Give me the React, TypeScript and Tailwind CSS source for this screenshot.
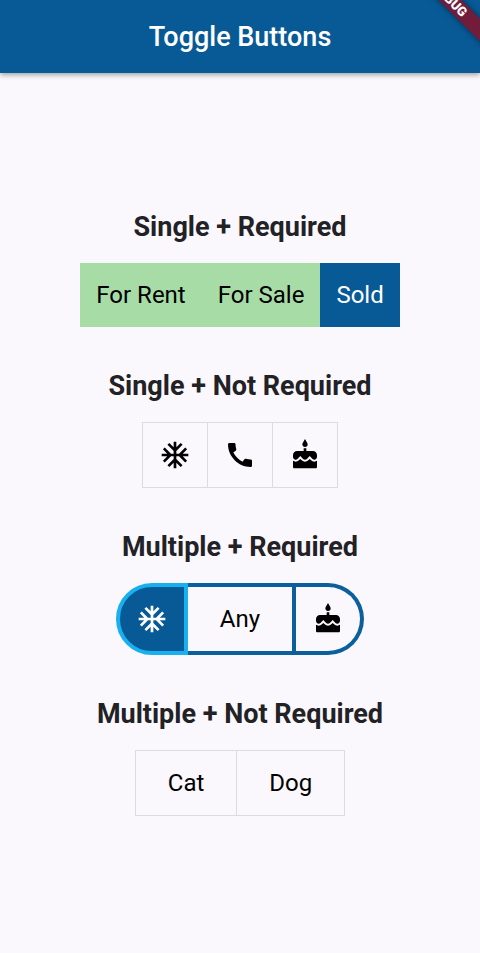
import { useState, type ReactNode } from "react";
import { MdAcUnit, MdCake, MdCall } from "react-icons/md";

type SectionProps = { title: string; children: ReactNode };

function Section({ title, children }: SectionProps) {
  return (
    <section className="flex flex-col items-center gap-5">
      <h2 className="text-[27px] leading-8 font-bold text-[#222126]">{title}</h2>
      <div role="group" aria-label={title} className="flex">
        {children}
      </div>
    </section>
  );
}

function useToggles(initial: boolean[], multiple: boolean, required: boolean) {
  const [on, setOn] = useState(initial);
  const toggle = (index: number) => {
    const next = on.map((value, i) => (i === index ? !value : multiple && value));
    if (required && !next.includes(true)) return;
    setOn(next);
  };
  return [on, toggle] as const;
}

const plainItem = "flex h-[66px] items-center border border-[#dcdbdf] not-first:border-l-0";

export default function App() {
  const [status, toggleStatus] = useToggles([false, false, true], false, true);
  const [single, toggleSingle] = useToggles([false, false, false], false, false);
  const [many, toggleMany] = useToggles([true, false, false], true, true);
  const [pets, togglePets] = useToggles([false, false], true, false);

  return (
    <div className="relative flex min-h-screen flex-col overflow-hidden bg-[#faf8fc] font-['Roboto',sans-serif] text-black">
      <header className="flex h-[73px] items-center justify-center bg-[#085a96] shadow-[0_2px_5px_rgba(0,0,0,0.35)]">
        <h1 className="text-[27px] leading-8 font-medium text-white">Toggle Buttons</h1>
      </header>
      <div className="absolute -top-2 -right-[50px] flex h-4 w-40 rotate-45 items-center justify-center bg-[#721c3b] text-[13px] leading-4 font-black text-white shadow-[0_0_6px_rgba(0,0,0,0.5)]">
        DEBUG
      </div>

      <main className="flex flex-1 flex-col items-center justify-center gap-[43px]">
        <Section title="Single + Required">
          {["For Rent", "For Sale", "Sold"].map((label, i) => (
            <button
              key={label}
              type="button"
              aria-pressed={status[i]}
              onClick={() => toggleStatus(i)}
              className={`h-16 px-4 text-2xl ${status[i] ? "bg-[#085a96] text-white" : "bg-[#a7dca7]"}`}
            >
              {label}
            </button>
          ))}
        </Section>

        <Section title="Single + Not Required">
          {[
            { name: "Cold", Icon: MdAcUnit },
            { name: "Call", Icon: MdCall },
            { name: "Cake", Icon: MdCake },
          ].map(({ name, Icon }, i) => (
            <button
              key={name}
              type="button"
              aria-label={name}
              aria-pressed={single[i]}
              onClick={() => toggleSingle(i)}
              className={`${plainItem} px-4 ${single[i] ? "bg-[#dbe7f1]" : ""}`}
            >
              <Icon className="size-8" />
            </button>
          ))}
        </Section>

        <Section title="Multiple + Required">
          {[
            { name: "Cold", content: <MdAcUnit className="size-8" />, padding: "px-4" },
            { name: "Any", content: "Any", padding: "px-8" },
            { name: "Cake", content: <MdCake className="size-8" />, padding: "px-4" },
          ].map(({ name, content, padding }, i) => (
            <button
              key={name}
              type="button"
              aria-label={name}
              aria-pressed={many[i]}
              onClick={() => toggleMany(i)}
              className={`flex h-[72px] items-center border-4 text-2xl not-first:border-l-0 first:rounded-l-full last:rounded-r-full ${padding} ${
                many[i] ? "border-[#18b0ee] bg-[#085a96] text-white" : "border-[#0b5f9c]"
              }`}
            >
              {content}
            </button>
          ))}
        </Section>

        <Section title="Multiple + Not Required">
          {["Cat", "Dog"].map((label, i) => (
            <button
              key={label}
              type="button"
              aria-pressed={pets[i]}
              onClick={() => togglePets(i)}
              className={`${plainItem} px-8 text-2xl ${pets[i] ? "bg-[#dbe7f1]" : ""}`}
            >
              {label}
            </button>
          ))}
        </Section>
      </main>
    </div>
  );
}
